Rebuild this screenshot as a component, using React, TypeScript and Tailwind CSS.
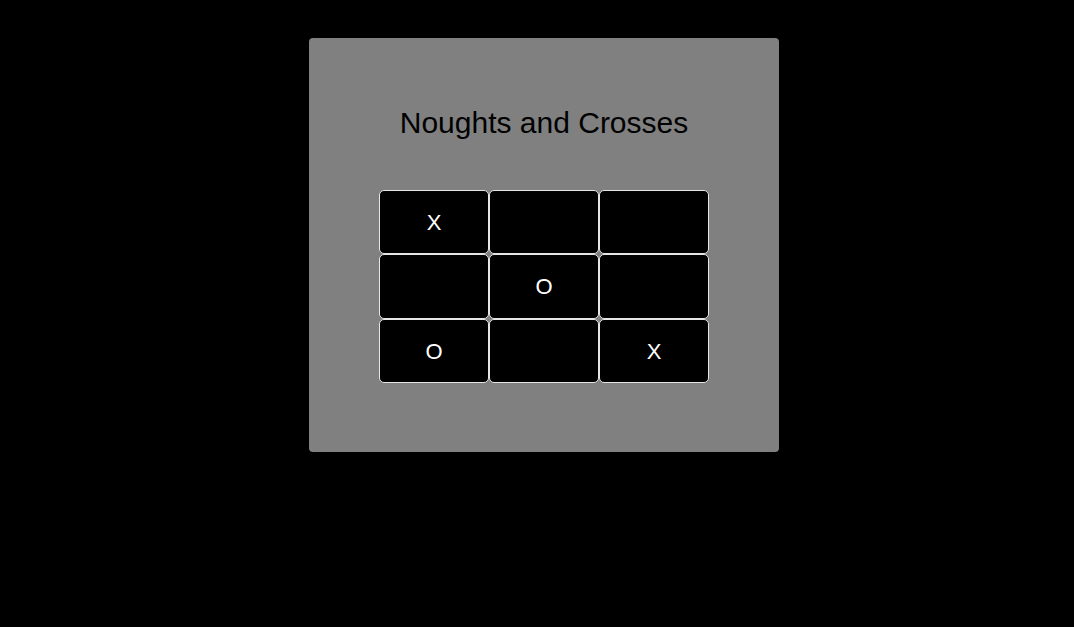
export default function App() {
  const cells = ["X", "", "", "", "O", "", "O", "", "X"];
  return (
    <div className="min-h-[627px] w-full bg-black pt-[38px]" style={{ fontFamily: '"Liberation Sans", Arial, sans-serif' }}>
      <div className="ml-[309px] flex w-[470px] flex-col items-center rounded-[4px] bg-[#808080] px-[70px] pb-[69px] pt-[68px]">
        <h1 className="text-[30px] leading-[34px] text-black">Noughts and Crosses</h1>
        <div className="mt-[50px] grid grid-cols-[repeat(3,110px)] grid-rows-[64px_65px_64px]">
          {cells.map((c, i) => (
            <div
              key={i}
              className="flex items-center justify-center rounded-[5px] border border-[#e6e6e6] bg-black text-[22px] text-white"
            >
              {c}
            </div>
          ))}
        </div>
      </div>
    </div>
  );
}
